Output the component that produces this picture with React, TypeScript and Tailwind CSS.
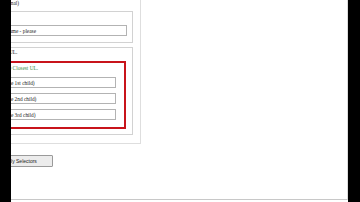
import React from 'react';

const serif = "font-['Liberation_Serif',serif]";

function TextInput({ value, width, indent }: { value: string; width: string; indent: string }) {
  return (
    <input
      className={`${serif} ${width} ${indent} block h-[11px] border border-[#b3b3b3] bg-white px-[2px] py-0 text-[5.33px] leading-none text-[#222] outline-none`}
      readOnly
      type="text"
      value={value}
    />
  );
}

export default function App() {
  return (
    <div className="flex h-[202px] w-[360px] overflow-hidden bg-white">
      <div className="h-full w-[11px] shrink-0 bg-black" />

      <div className="relative h-[200px] w-[337px] shrink-0 overflow-hidden border-r border-b border-r-[#dcdcdc] border-b-[#c8c8c8]">
        <div className={`${serif} ml-[-30px] flex flex-col items-start text-[5.33px] text-[#222]`}>
          {/* outer panel */}
          <div className="mt-[-12px] flex w-[160px] flex-col border border-[#dedede] pt-[11px] pr-[7px] pb-[8px] pl-[6px]">
            <p className="h-[6px] pl-[10px] leading-[6px] whitespace-nowrap">(optional)</p>

            <fieldset className="mt-[5px] flex flex-col border border-[#d2d2d2] pt-[13px] pr-[5px] pb-[6px] pl-[5px]">
              <TextInput indent="indent-[-2px]" value="Your name - please" width="w-[133px]" />
            </fieldset>

            <fieldset className="mt-[4px] flex flex-col border border-[#d2d2d2] pt-[1px] pr-[6px] pb-[5px] pl-[5px]">
              <p className="h-[6px] leading-[6px] whitespace-nowrap">Parent UL.</p>

              <div className="mt-[6px] flex flex-col border-2 border-[#c8141b] pt-[2px] pr-[6px] pb-[7px] pl-[4px]">
                <p className="h-[6px] pl-[3px] leading-[6px] whitespace-nowrap text-[#3d8a3d]">The Closest UL.</p>
                <div className="mt-[6px] flex flex-col gap-[5px]">
                  <TextInput indent="indent-[2px]" value="(the 1st child)" width="w-[116px]" />
                  <TextInput indent="indent-[2px]" value="(the 2nd child)" width="w-[116px]" />
                  <TextInput indent="indent-[2px]" value="(the 3rd child)" width="w-[116px]" />
                </div>
              </div>
            </fieldset>
          </div>

          <button
            className="mt-[11px] ml-[5px] flex h-[12px] w-[67px] items-center justify-center rounded-[1px] border border-[#9a9a9a] bg-[#ececec] font-['Liberation_Sans',sans-serif] text-[5px] leading-none text-[#222]"
            type="button"
          >
            Apply Selectors
          </button>
        </div>
      </div>

      <div className="h-full w-[12px] shrink-0 bg-black" />
    </div>
  );
}
